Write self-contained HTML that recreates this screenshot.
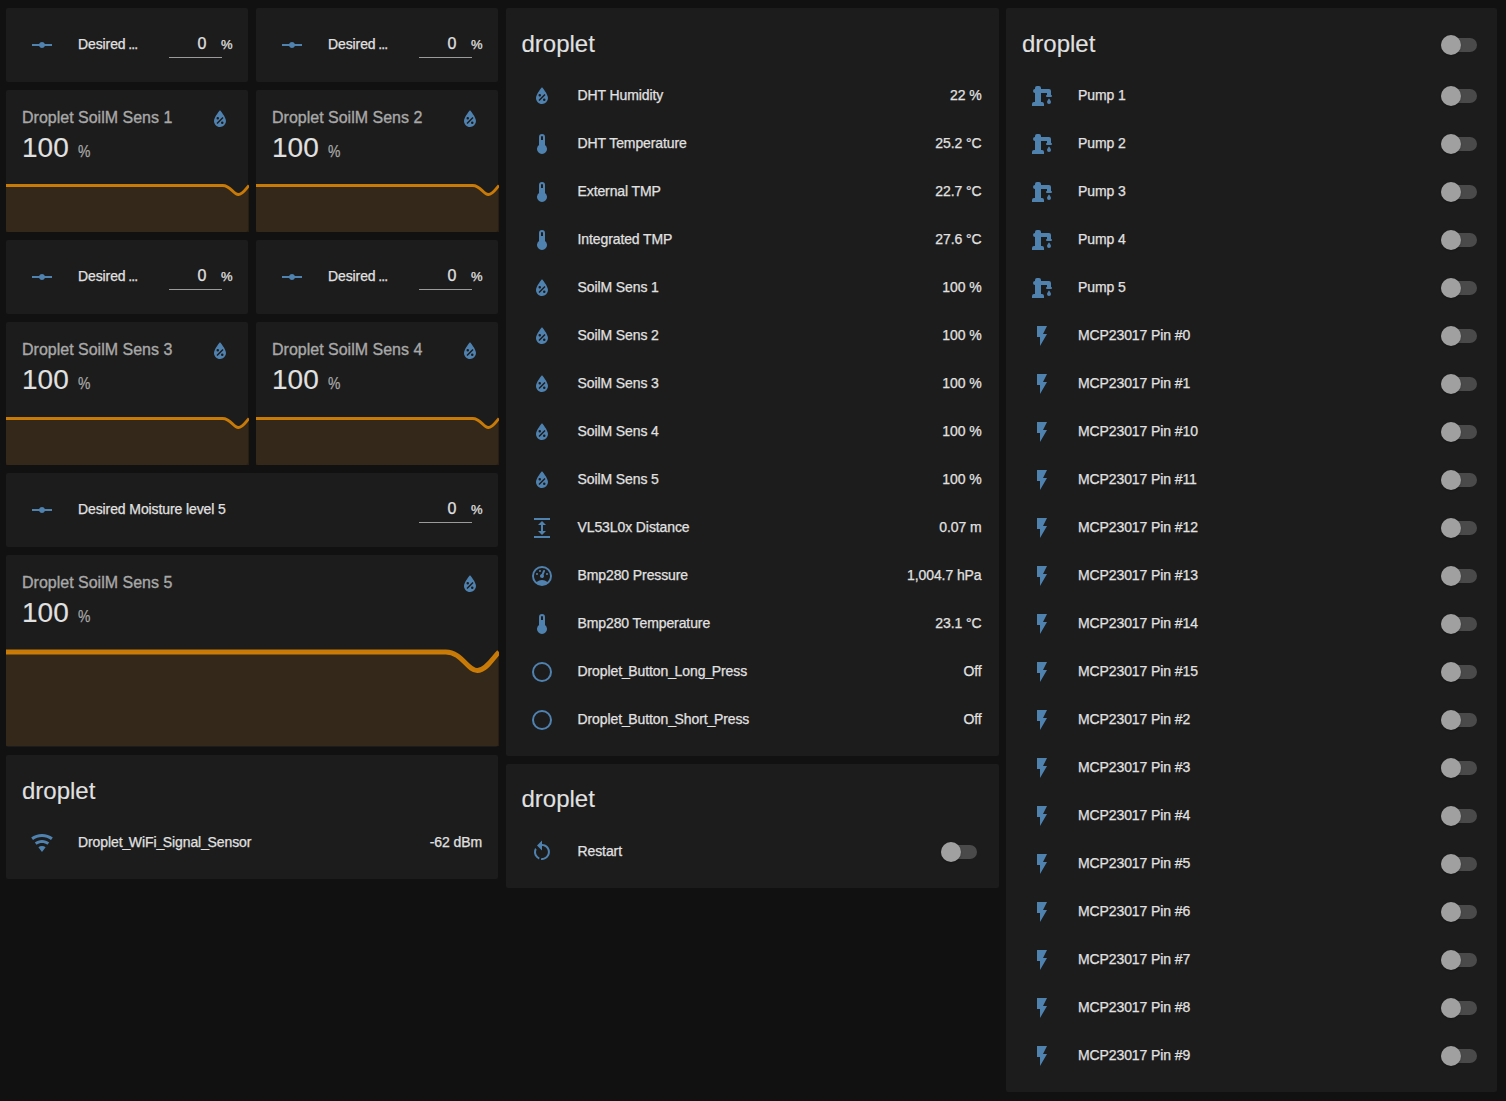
<!DOCTYPE html>
<html><head><meta charset="utf-8"><title>droplet</title>
<style>
html,body{margin:0;padding:0;}
body{width:1506px;height:1101px;background:#111111;position:relative;overflow:hidden;font-family:"Liberation Sans",sans-serif;color:#e1e1e1;}
.card{position:absolute;background:#1c1c1c;border-radius:2px;}
.t{position:absolute;white-space:nowrap;-webkit-text-stroke:0.25px currentColor;}
.ic{position:absolute;display:block;}
.gr{position:absolute;display:block;}
.u{letter-spacing:-1.4px;}
.big{-webkit-text-stroke:0.12px currentColor;}
.unit{transform:scaleX(.82);transform-origin:0 0;}
.ttl{-webkit-text-stroke:0.35px currentColor;}
.ul{position:absolute;height:1px;background:#9b9b9b;}
.trk{position:absolute;width:36px;height:14px;border-radius:7px;background:#4a4a4a;}
.thb{position:absolute;width:20px;height:20px;border-radius:50%;background:#a0a0a0;box-shadow:0 1px 2px rgba(0,0,0,.25);}
</style></head><body>
<div class="card" style="left:6px;top:8px;width:242px;height:74px;"></div>
<svg class="ic" style="left:30.00px;top:32.80px;width:24px;height:24px" viewBox="0 0 24 24"><path fill="#5082b0" d="M2 11H9.17C9.58 9.83 10.69 9 12 9S14.42 9.83 14.83 11H22V13H14.83C14.42 14.17 13.31 15 12 15S9.58 14.17 9.17 13H2V11Z"/></svg>
<div class="t " style="top:36.95px;font-size:14px;line-height:14px;letter-spacing:-0.1px;left:78px;">Desired <span style="letter-spacing:-0.9px;margin-left:-1.2px">...</span></div>
<div class="t " style="top:36.36px;font-size:16px;line-height:16px;right:1299.50px;">0</div>
<div class="t " style="top:38.00px;font-size:13px;line-height:13px;right:1273.50px;">%</div>
<div class="ul" style="left:168.80px;top:57.00px;width:53.3px"></div>
<div class="card" style="left:256px;top:8px;width:242px;height:74px;"></div>
<svg class="ic" style="left:280.00px;top:32.80px;width:24px;height:24px" viewBox="0 0 24 24"><path fill="#5082b0" d="M2 11H9.17C9.58 9.83 10.69 9 12 9S14.42 9.83 14.83 11H22V13H14.83C14.42 14.17 13.31 15 12 15S9.58 14.17 9.17 13H2V11Z"/></svg>
<div class="t " style="top:36.95px;font-size:14px;line-height:14px;letter-spacing:-0.1px;left:328px;">Desired <span style="letter-spacing:-0.9px;margin-left:-1.2px">...</span></div>
<div class="t " style="top:36.36px;font-size:16px;line-height:16px;right:1049.50px;">0</div>
<div class="t " style="top:38.00px;font-size:13px;line-height:13px;right:1023.50px;">%</div>
<div class="ul" style="left:418.80px;top:57.00px;width:53.3px"></div>
<div class="card" style="left:6px;top:90px;width:242px;height:142px;overflow:hidden;"></div>
<div class="t ttl" style="top:109.86px;font-size:16px;line-height:16px;color:#a8a8a8;left:22px;">Droplet SoilM Sens 1</div>
<svg class="ic" style="left:208.00px;top:106.50px;width:24px;height:24px" viewBox="0 0 24 24"><path fill="#5082b0" d="M12,3.25C12,3.25 6,10 6,14C6,17.32 8.69,20 12,20A6,6 0 0,0 18,14C18,10 12,3.25 12,3.25M14.47,9.97L15.53,11.03L9.53,17.03L8.47,15.97M9.75,10A1.25,1.25 0 0,1 11,11.25A1.25,1.25 0 0,1 9.75,12.5A1.25,1.25 0 0,1 8.5,11.25A1.25,1.25 0 0,1 9.75,10M14.25,14.5A1.25,1.25 0 0,1 15.5,15.75A1.25,1.25 0 0,1 14.25,17A1.25,1.25 0 0,1 13,15.75A1.25,1.25 0 0,1 14.25,14.5Z"/></svg>
<div class="t big" style="top:134.10px;font-size:28px;line-height:28px;left:22px;">100</div>
<div class="t unit" style="top:143.41px;font-size:17px;line-height:17px;color:#a8a8a8;left:78px;">%</div>
<svg class="gr" style="left:5.50px;top:184.00px;width:243.00px;height:48.00px" viewBox="0 0 500 100" preserveAspectRatio="none"><path d="M0,3 L446,3 C462,3 468,22 478,22 C487,22 494,9 500,3 L500,100 L0,100 Z" fill="#ff9800" fill-opacity="0.1"/><path d="M0,3 L446,3 C462,3 468,22 478,22 C487,22 494,9 500,3" fill="none" stroke="#ff9800" stroke-width="6" stroke-opacity="0.75"/></svg>
<div class="card" style="left:256px;top:90px;width:242px;height:142px;overflow:hidden;"></div>
<div class="t ttl" style="top:109.86px;font-size:16px;line-height:16px;color:#a8a8a8;left:272px;">Droplet SoilM Sens 2</div>
<svg class="ic" style="left:458.00px;top:106.50px;width:24px;height:24px" viewBox="0 0 24 24"><path fill="#5082b0" d="M12,3.25C12,3.25 6,10 6,14C6,17.32 8.69,20 12,20A6,6 0 0,0 18,14C18,10 12,3.25 12,3.25M14.47,9.97L15.53,11.03L9.53,17.03L8.47,15.97M9.75,10A1.25,1.25 0 0,1 11,11.25A1.25,1.25 0 0,1 9.75,12.5A1.25,1.25 0 0,1 8.5,11.25A1.25,1.25 0 0,1 9.75,10M14.25,14.5A1.25,1.25 0 0,1 15.5,15.75A1.25,1.25 0 0,1 14.25,17A1.25,1.25 0 0,1 13,15.75A1.25,1.25 0 0,1 14.25,14.5Z"/></svg>
<div class="t big" style="top:134.10px;font-size:28px;line-height:28px;left:272px;">100</div>
<div class="t unit" style="top:143.41px;font-size:17px;line-height:17px;color:#a8a8a8;left:328px;">%</div>
<svg class="gr" style="left:255.50px;top:184.00px;width:243.00px;height:48.00px" viewBox="0 0 500 100" preserveAspectRatio="none"><path d="M0,3 L446,3 C462,3 468,22 478,22 C487,22 494,9 500,3 L500,100 L0,100 Z" fill="#ff9800" fill-opacity="0.1"/><path d="M0,3 L446,3 C462,3 468,22 478,22 C487,22 494,9 500,3" fill="none" stroke="#ff9800" stroke-width="6" stroke-opacity="0.75"/></svg>
<div class="card" style="left:6px;top:240px;width:242px;height:74px;"></div>
<svg class="ic" style="left:30.00px;top:264.80px;width:24px;height:24px" viewBox="0 0 24 24"><path fill="#5082b0" d="M2 11H9.17C9.58 9.83 10.69 9 12 9S14.42 9.83 14.83 11H22V13H14.83C14.42 14.17 13.31 15 12 15S9.58 14.17 9.17 13H2V11Z"/></svg>
<div class="t " style="top:268.95px;font-size:14px;line-height:14px;letter-spacing:-0.1px;left:78px;">Desired <span style="letter-spacing:-0.9px;margin-left:-1.2px">...</span></div>
<div class="t " style="top:268.36px;font-size:16px;line-height:16px;right:1299.50px;">0</div>
<div class="t " style="top:270.00px;font-size:13px;line-height:13px;right:1273.50px;">%</div>
<div class="ul" style="left:168.80px;top:289.00px;width:53.3px"></div>
<div class="card" style="left:256px;top:240px;width:242px;height:74px;"></div>
<svg class="ic" style="left:280.00px;top:264.80px;width:24px;height:24px" viewBox="0 0 24 24"><path fill="#5082b0" d="M2 11H9.17C9.58 9.83 10.69 9 12 9S14.42 9.83 14.83 11H22V13H14.83C14.42 14.17 13.31 15 12 15S9.58 14.17 9.17 13H2V11Z"/></svg>
<div class="t " style="top:268.95px;font-size:14px;line-height:14px;letter-spacing:-0.1px;left:328px;">Desired <span style="letter-spacing:-0.9px;margin-left:-1.2px">...</span></div>
<div class="t " style="top:268.36px;font-size:16px;line-height:16px;right:1049.50px;">0</div>
<div class="t " style="top:270.00px;font-size:13px;line-height:13px;right:1023.50px;">%</div>
<div class="ul" style="left:418.80px;top:289.00px;width:53.3px"></div>
<div class="card" style="left:6px;top:322px;width:242px;height:142.5px;overflow:hidden;"></div>
<div class="t ttl" style="top:341.86px;font-size:16px;line-height:16px;color:#a8a8a8;left:22px;">Droplet SoilM Sens 3</div>
<svg class="ic" style="left:208.00px;top:338.50px;width:24px;height:24px" viewBox="0 0 24 24"><path fill="#5082b0" d="M12,3.25C12,3.25 6,10 6,14C6,17.32 8.69,20 12,20A6,6 0 0,0 18,14C18,10 12,3.25 12,3.25M14.47,9.97L15.53,11.03L9.53,17.03L8.47,15.97M9.75,10A1.25,1.25 0 0,1 11,11.25A1.25,1.25 0 0,1 9.75,12.5A1.25,1.25 0 0,1 8.5,11.25A1.25,1.25 0 0,1 9.75,10M14.25,14.5A1.25,1.25 0 0,1 15.5,15.75A1.25,1.25 0 0,1 14.25,17A1.25,1.25 0 0,1 13,15.75A1.25,1.25 0 0,1 14.25,14.5Z"/></svg>
<div class="t big" style="top:366.10px;font-size:28px;line-height:28px;left:22px;">100</div>
<div class="t unit" style="top:375.41px;font-size:17px;line-height:17px;color:#a8a8a8;left:78px;">%</div>
<svg class="gr" style="left:5.50px;top:416.50px;width:243.00px;height:48.00px" viewBox="0 0 500 100" preserveAspectRatio="none"><path d="M0,3 L446,3 C462,3 468,22 478,22 C487,22 494,9 500,3 L500,100 L0,100 Z" fill="#ff9800" fill-opacity="0.1"/><path d="M0,3 L446,3 C462,3 468,22 478,22 C487,22 494,9 500,3" fill="none" stroke="#ff9800" stroke-width="6" stroke-opacity="0.75"/></svg>
<div class="card" style="left:256px;top:322px;width:242px;height:142.5px;overflow:hidden;"></div>
<div class="t ttl" style="top:341.86px;font-size:16px;line-height:16px;color:#a8a8a8;left:272px;">Droplet SoilM Sens 4</div>
<svg class="ic" style="left:458.00px;top:338.50px;width:24px;height:24px" viewBox="0 0 24 24"><path fill="#5082b0" d="M12,3.25C12,3.25 6,10 6,14C6,17.32 8.69,20 12,20A6,6 0 0,0 18,14C18,10 12,3.25 12,3.25M14.47,9.97L15.53,11.03L9.53,17.03L8.47,15.97M9.75,10A1.25,1.25 0 0,1 11,11.25A1.25,1.25 0 0,1 9.75,12.5A1.25,1.25 0 0,1 8.5,11.25A1.25,1.25 0 0,1 9.75,10M14.25,14.5A1.25,1.25 0 0,1 15.5,15.75A1.25,1.25 0 0,1 14.25,17A1.25,1.25 0 0,1 13,15.75A1.25,1.25 0 0,1 14.25,14.5Z"/></svg>
<div class="t big" style="top:366.10px;font-size:28px;line-height:28px;left:272px;">100</div>
<div class="t unit" style="top:375.41px;font-size:17px;line-height:17px;color:#a8a8a8;left:328px;">%</div>
<svg class="gr" style="left:255.50px;top:416.50px;width:243.00px;height:48.00px" viewBox="0 0 500 100" preserveAspectRatio="none"><path d="M0,3 L446,3 C462,3 468,22 478,22 C487,22 494,9 500,3 L500,100 L0,100 Z" fill="#ff9800" fill-opacity="0.1"/><path d="M0,3 L446,3 C462,3 468,22 478,22 C487,22 494,9 500,3" fill="none" stroke="#ff9800" stroke-width="6" stroke-opacity="0.75"/></svg>
<div class="card" style="left:6px;top:473px;width:492px;height:74px;"></div>
<svg class="ic" style="left:30.00px;top:497.80px;width:24px;height:24px" viewBox="0 0 24 24"><path fill="#5082b0" d="M2 11H9.17C9.58 9.83 10.69 9 12 9S14.42 9.83 14.83 11H22V13H14.83C14.42 14.17 13.31 15 12 15S9.58 14.17 9.17 13H2V11Z"/></svg>
<div class="t " style="top:501.95px;font-size:14px;line-height:14px;letter-spacing:-0.1px;left:78px;">Desired Moisture level 5</div>
<div class="t " style="top:501.36px;font-size:16px;line-height:16px;right:1049.50px;">0</div>
<div class="t " style="top:503.00px;font-size:13px;line-height:13px;right:1023.50px;">%</div>
<div class="ul" style="left:418.80px;top:522.00px;width:53.3px"></div>
<div class="card" style="left:6px;top:555px;width:492px;height:191.5px;overflow:hidden;"></div>
<div class="t ttl" style="top:574.86px;font-size:16px;line-height:16px;color:#a8a8a8;left:22px;">Droplet SoilM Sens 5</div>
<svg class="ic" style="left:458.00px;top:571.50px;width:24px;height:24px" viewBox="0 0 24 24"><path fill="#5082b0" d="M12,3.25C12,3.25 6,10 6,14C6,17.32 8.69,20 12,20A6,6 0 0,0 18,14C18,10 12,3.25 12,3.25M14.47,9.97L15.53,11.03L9.53,17.03L8.47,15.97M9.75,10A1.25,1.25 0 0,1 11,11.25A1.25,1.25 0 0,1 9.75,12.5A1.25,1.25 0 0,1 8.5,11.25A1.25,1.25 0 0,1 9.75,10M14.25,14.5A1.25,1.25 0 0,1 15.5,15.75A1.25,1.25 0 0,1 14.25,17A1.25,1.25 0 0,1 13,15.75A1.25,1.25 0 0,1 14.25,14.5Z"/></svg>
<div class="t big" style="top:599.10px;font-size:28px;line-height:28px;left:22px;">100</div>
<div class="t unit" style="top:608.41px;font-size:17px;line-height:17px;color:#a8a8a8;left:78px;">%</div>
<svg class="gr" style="left:5.50px;top:648.60px;width:493.00px;height:97.90px" viewBox="0 0 500 100" preserveAspectRatio="none"><path d="M0,3 L446,3 C462,3 468,22 478,22 C487,22 494,9 500,3 L500,100 L0,100 Z" fill="#ff9800" fill-opacity="0.1"/><path d="M0,3 L446,3 C462,3 468,22 478,22 C487,22 494,9 500,3" fill="none" stroke="#ff9800" stroke-width="5" stroke-opacity="0.75"/></svg>
<div class="card" style="left:6px;top:755px;width:492px;height:124px;"></div>
<div class="t big" style="top:778.98px;font-size:24px;line-height:24px;left:22px;">droplet</div>
<svg class="ic" style="left:30.00px;top:830.50px;width:24px;height:24px" viewBox="0 0 24 24"><path fill="#5082b0" d="M12,21L15.6,16.2C14.6,15.45 13.35,15 12,15C10.65,15 9.4,15.45 8.4,16.2L12,21M12,3C7.95,3 4.21,4.34 1.2,6.6L3,9C5.5,7.12 8.62,6 12,6C15.38,6 18.5,7.12 21,9L22.8,6.6C19.79,4.34 16.05,3 12,3M12,9C9.3,9 6.81,9.89 4.8,11.4L6.6,13.8C8.1,12.67 9.97,12 12,12C14.03,12 15.9,12.67 17.4,13.8L19.2,11.4C17.19,9.89 14.7,9 12,9Z"/></svg>
<div class="t " style="top:834.65px;font-size:14px;line-height:14px;letter-spacing:-0.1px;left:78px;">Droplet<span class="u">_</span>WiFi<span class="u">_</span>Signal<span class="u">_</span>Sensor</div>
<div class="t " style="top:834.65px;font-size:14px;line-height:14px;letter-spacing:-0.1px;right:1024.00px;">-62 dBm</div>
<div class="card" style="left:505.5px;top:8px;width:493.0px;height:748px;"></div>
<div class="t big" style="top:31.98px;font-size:24px;line-height:24px;left:521.5px;">droplet</div>
<svg class="ic" style="left:529.50px;top:84.20px;width:24px;height:24px" viewBox="0 0 24 24"><path fill="#5082b0" d="M12,3.25C12,3.25 6,10 6,14C6,17.32 8.69,20 12,20A6,6 0 0,0 18,14C18,10 12,3.25 12,3.25M14.47,9.97L15.53,11.03L9.53,17.03L8.47,15.97M9.75,10A1.25,1.25 0 0,1 11,11.25A1.25,1.25 0 0,1 9.75,12.5A1.25,1.25 0 0,1 8.5,11.25A1.25,1.25 0 0,1 9.75,10M14.25,14.5A1.25,1.25 0 0,1 15.5,15.75A1.25,1.25 0 0,1 14.25,17A1.25,1.25 0 0,1 13,15.75A1.25,1.25 0 0,1 14.25,14.5Z"/></svg>
<div class="t " style="top:88.25px;font-size:14px;line-height:14px;letter-spacing:-0.1px;left:577.5px;">DHT Humidity</div>
<div class="t " style="top:88.25px;font-size:14px;line-height:14px;letter-spacing:-0.1px;right:524.50px;">22 %</div>
<svg class="ic" style="left:529.50px;top:132.20px;width:24px;height:24px" viewBox="0 0 24 24"><path fill="#5082b0" d="M15 13V5A3 3 0 0 0 9 5V13A5 5 0 1 0 15 13M12 4A1 1 0 0 1 13 5V8H11V5A1 1 0 0 1 12 4Z"/></svg>
<div class="t " style="top:136.25px;font-size:14px;line-height:14px;letter-spacing:-0.1px;left:577.5px;">DHT Temperature</div>
<div class="t " style="top:136.25px;font-size:14px;line-height:14px;letter-spacing:-0.1px;right:524.50px;">25.2 °C</div>
<svg class="ic" style="left:529.50px;top:180.20px;width:24px;height:24px" viewBox="0 0 24 24"><path fill="#5082b0" d="M15 13V5A3 3 0 0 0 9 5V13A5 5 0 1 0 15 13M12 4A1 1 0 0 1 13 5V8H11V5A1 1 0 0 1 12 4Z"/></svg>
<div class="t " style="top:184.25px;font-size:14px;line-height:14px;letter-spacing:-0.1px;left:577.5px;">External TMP</div>
<div class="t " style="top:184.25px;font-size:14px;line-height:14px;letter-spacing:-0.1px;right:524.50px;">22.7 °C</div>
<svg class="ic" style="left:529.50px;top:228.20px;width:24px;height:24px" viewBox="0 0 24 24"><path fill="#5082b0" d="M15 13V5A3 3 0 0 0 9 5V13A5 5 0 1 0 15 13M12 4A1 1 0 0 1 13 5V8H11V5A1 1 0 0 1 12 4Z"/></svg>
<div class="t " style="top:232.25px;font-size:14px;line-height:14px;letter-spacing:-0.1px;left:577.5px;">Integrated TMP</div>
<div class="t " style="top:232.25px;font-size:14px;line-height:14px;letter-spacing:-0.1px;right:524.50px;">27.6 °C</div>
<svg class="ic" style="left:529.50px;top:276.20px;width:24px;height:24px" viewBox="0 0 24 24"><path fill="#5082b0" d="M12,3.25C12,3.25 6,10 6,14C6,17.32 8.69,20 12,20A6,6 0 0,0 18,14C18,10 12,3.25 12,3.25M14.47,9.97L15.53,11.03L9.53,17.03L8.47,15.97M9.75,10A1.25,1.25 0 0,1 11,11.25A1.25,1.25 0 0,1 9.75,12.5A1.25,1.25 0 0,1 8.5,11.25A1.25,1.25 0 0,1 9.75,10M14.25,14.5A1.25,1.25 0 0,1 15.5,15.75A1.25,1.25 0 0,1 14.25,17A1.25,1.25 0 0,1 13,15.75A1.25,1.25 0 0,1 14.25,14.5Z"/></svg>
<div class="t " style="top:280.25px;font-size:14px;line-height:14px;letter-spacing:-0.1px;left:577.5px;">SoilM Sens 1</div>
<div class="t " style="top:280.25px;font-size:14px;line-height:14px;letter-spacing:-0.1px;right:524.50px;">100 %</div>
<svg class="ic" style="left:529.50px;top:324.20px;width:24px;height:24px" viewBox="0 0 24 24"><path fill="#5082b0" d="M12,3.25C12,3.25 6,10 6,14C6,17.32 8.69,20 12,20A6,6 0 0,0 18,14C18,10 12,3.25 12,3.25M14.47,9.97L15.53,11.03L9.53,17.03L8.47,15.97M9.75,10A1.25,1.25 0 0,1 11,11.25A1.25,1.25 0 0,1 9.75,12.5A1.25,1.25 0 0,1 8.5,11.25A1.25,1.25 0 0,1 9.75,10M14.25,14.5A1.25,1.25 0 0,1 15.5,15.75A1.25,1.25 0 0,1 14.25,17A1.25,1.25 0 0,1 13,15.75A1.25,1.25 0 0,1 14.25,14.5Z"/></svg>
<div class="t " style="top:328.25px;font-size:14px;line-height:14px;letter-spacing:-0.1px;left:577.5px;">SoilM Sens 2</div>
<div class="t " style="top:328.25px;font-size:14px;line-height:14px;letter-spacing:-0.1px;right:524.50px;">100 %</div>
<svg class="ic" style="left:529.50px;top:372.20px;width:24px;height:24px" viewBox="0 0 24 24"><path fill="#5082b0" d="M12,3.25C12,3.25 6,10 6,14C6,17.32 8.69,20 12,20A6,6 0 0,0 18,14C18,10 12,3.25 12,3.25M14.47,9.97L15.53,11.03L9.53,17.03L8.47,15.97M9.75,10A1.25,1.25 0 0,1 11,11.25A1.25,1.25 0 0,1 9.75,12.5A1.25,1.25 0 0,1 8.5,11.25A1.25,1.25 0 0,1 9.75,10M14.25,14.5A1.25,1.25 0 0,1 15.5,15.75A1.25,1.25 0 0,1 14.25,17A1.25,1.25 0 0,1 13,15.75A1.25,1.25 0 0,1 14.25,14.5Z"/></svg>
<div class="t " style="top:376.25px;font-size:14px;line-height:14px;letter-spacing:-0.1px;left:577.5px;">SoilM Sens 3</div>
<div class="t " style="top:376.25px;font-size:14px;line-height:14px;letter-spacing:-0.1px;right:524.50px;">100 %</div>
<svg class="ic" style="left:529.50px;top:420.20px;width:24px;height:24px" viewBox="0 0 24 24"><path fill="#5082b0" d="M12,3.25C12,3.25 6,10 6,14C6,17.32 8.69,20 12,20A6,6 0 0,0 18,14C18,10 12,3.25 12,3.25M14.47,9.97L15.53,11.03L9.53,17.03L8.47,15.97M9.75,10A1.25,1.25 0 0,1 11,11.25A1.25,1.25 0 0,1 9.75,12.5A1.25,1.25 0 0,1 8.5,11.25A1.25,1.25 0 0,1 9.75,10M14.25,14.5A1.25,1.25 0 0,1 15.5,15.75A1.25,1.25 0 0,1 14.25,17A1.25,1.25 0 0,1 13,15.75A1.25,1.25 0 0,1 14.25,14.5Z"/></svg>
<div class="t " style="top:424.25px;font-size:14px;line-height:14px;letter-spacing:-0.1px;left:577.5px;">SoilM Sens 4</div>
<div class="t " style="top:424.25px;font-size:14px;line-height:14px;letter-spacing:-0.1px;right:524.50px;">100 %</div>
<svg class="ic" style="left:529.50px;top:468.20px;width:24px;height:24px" viewBox="0 0 24 24"><path fill="#5082b0" d="M12,3.25C12,3.25 6,10 6,14C6,17.32 8.69,20 12,20A6,6 0 0,0 18,14C18,10 12,3.25 12,3.25M14.47,9.97L15.53,11.03L9.53,17.03L8.47,15.97M9.75,10A1.25,1.25 0 0,1 11,11.25A1.25,1.25 0 0,1 9.75,12.5A1.25,1.25 0 0,1 8.5,11.25A1.25,1.25 0 0,1 9.75,10M14.25,14.5A1.25,1.25 0 0,1 15.5,15.75A1.25,1.25 0 0,1 14.25,17A1.25,1.25 0 0,1 13,15.75A1.25,1.25 0 0,1 14.25,14.5Z"/></svg>
<div class="t " style="top:472.25px;font-size:14px;line-height:14px;letter-spacing:-0.1px;left:577.5px;">SoilM Sens 5</div>
<div class="t " style="top:472.25px;font-size:14px;line-height:14px;letter-spacing:-0.1px;right:524.50px;">100 %</div>
<svg class="ic" style="left:529.50px;top:516.20px;width:24px;height:24px" viewBox="0 0 24 24"><path fill="#5082b0" d="M13,9V15H16L12,19L8,15H11V9H8L12,5L16,9H13M4,2H20V4H4V2M4,20H20V22H4V20Z"/></svg>
<div class="t " style="top:520.25px;font-size:14px;line-height:14px;letter-spacing:-0.1px;left:577.5px;">VL53L0x Distance</div>
<div class="t " style="top:520.25px;font-size:14px;line-height:14px;letter-spacing:-0.1px;right:524.50px;">0.07 m</div>
<svg class="ic" style="left:529.50px;top:564.20px;width:24px;height:24px" viewBox="0 0 24 24"><path fill="#5082b0" d="M12,2A10,10 0 0,0 2,12A10,10 0 0,0 12,22A10,10 0 0,0 22,12A10,10 0 0,0 12,2M12,4A8,8 0 0,1 20,12C20,14.4 19,16.5 17.3,18C15.9,16.7 14,16 12,16C10,16 8.2,16.7 6.7,18C5,16.5 4,14.4 4,12A8,8 0 0,1 12,4M14,5.89C13.62,5.9 13.26,6.15 13.1,6.54L11.81,9.77L11.71,10C11,10.13 10.41,10.6 10.14,11.26C9.73,12.29 10.23,13.45 11.26,13.86C12.29,14.27 13.45,13.77 13.86,12.74C14.12,12.08 14,11.32 13.57,10.76L13.67,10.5L14.96,7.29L14.97,7.26C15.17,6.75 14.92,6.17 14.41,5.96C14.28,5.91 14.15,5.89 14,5.89M10,6A1,1 0 0,0 9,7A1,1 0 0,0 10,8A1,1 0 0,0 11,7A1,1 0 0,0 10,6M7,9A1,1 0 0,0 6,10A1,1 0 0,0 7,11A1,1 0 0,0 8,10A1,1 0 0,0 7,9M17,9A1,1 0 0,0 16,10A1,1 0 0,0 17,11A1,1 0 0,0 18,10A1,1 0 0,0 17,9Z"/></svg>
<div class="t " style="top:568.25px;font-size:14px;line-height:14px;letter-spacing:-0.1px;left:577.5px;">Bmp280 Pressure</div>
<div class="t " style="top:568.25px;font-size:14px;line-height:14px;letter-spacing:-0.1px;right:524.50px;">1,004.7 hPa</div>
<svg class="ic" style="left:529.50px;top:612.20px;width:24px;height:24px" viewBox="0 0 24 24"><path fill="#5082b0" d="M15 13V5A3 3 0 0 0 9 5V13A5 5 0 1 0 15 13M12 4A1 1 0 0 1 13 5V8H11V5A1 1 0 0 1 12 4Z"/></svg>
<div class="t " style="top:616.25px;font-size:14px;line-height:14px;letter-spacing:-0.1px;left:577.5px;">Bmp280 Temperature</div>
<div class="t " style="top:616.25px;font-size:14px;line-height:14px;letter-spacing:-0.1px;right:524.50px;">23.1 °C</div>
<svg class="ic" style="left:529.50px;top:660.20px;width:24px;height:24px" viewBox="0 0 24 24"><path fill="#5082b0" d="M12,20A8,8 0 0,1 4,12A8,8 0 0,1 12,4A8,8 0 0,1 20,12A8,8 0 0,1 12,20M12,2A10,10 0 0,0 2,12A10,10 0 0,0 12,22A10,10 0 0,0 22,12A10,10 0 0,0 12,2Z"/></svg>
<div class="t " style="top:664.25px;font-size:14px;line-height:14px;letter-spacing:-0.1px;left:577.5px;">Droplet<span class="u">_</span>Button<span class="u">_</span>Long<span class="u">_</span>Press</div>
<div class="t " style="top:664.25px;font-size:14px;line-height:14px;letter-spacing:-0.1px;right:524.50px;">Off</div>
<svg class="ic" style="left:529.50px;top:708.20px;width:24px;height:24px" viewBox="0 0 24 24"><path fill="#5082b0" d="M12,20A8,8 0 0,1 4,12A8,8 0 0,1 12,4A8,8 0 0,1 20,12A8,8 0 0,1 12,20M12,2A10,10 0 0,0 2,12A10,10 0 0,0 12,22A10,10 0 0,0 22,12A10,10 0 0,0 12,2Z"/></svg>
<div class="t " style="top:712.25px;font-size:14px;line-height:14px;letter-spacing:-0.1px;left:577.5px;">Droplet<span class="u">_</span>Button<span class="u">_</span>Short<span class="u">_</span>Press</div>
<div class="t " style="top:712.25px;font-size:14px;line-height:14px;letter-spacing:-0.1px;right:524.50px;">Off</div>
<div class="card" style="left:505.5px;top:764px;width:493.0px;height:124px;"></div>
<div class="t big" style="top:787.48px;font-size:24px;line-height:24px;left:521.5px;">droplet</div>
<svg class="ic" style="left:529.50px;top:840.00px;width:24px;height:24px" viewBox="0 0 24 24"><path fill="#5082b0" d="M12,4C14.1,4 16.1,4.8 17.6,6.3C20.7,9.4 20.7,14.5 17.6,17.6C15.8,19.5 13.3,20.2 10.9,19.9L11.4,17.9C13.1,18.1 14.9,17.5 16.2,16.2C18.5,13.9 18.5,10.1 16.2,7.7C15.1,6.6 13.5,6 12,6V10.6L7,5.6L12,0.6V4M6.3,17.6C3.7,15 3.3,11 5.1,7.9L6.6,9.4C5.5,11.6 5.9,14.4 7.8,16.2C8.3,16.7 8.9,17.1 9.6,17.4L9,19.4C8,19 7.1,18.4 6.3,17.6Z"/></svg>
<div class="t " style="top:844.05px;font-size:14px;line-height:14px;letter-spacing:-0.1px;left:577.5px;">Restart</div>
<div class="trk" style="left:941.00px;top:845.00px"></div>
<div class="thb" style="left:941.00px;top:842.00px"></div>
<div class="card" style="left:1006px;top:8px;width:491px;height:1084px;"></div>
<div class="t big" style="top:31.78px;font-size:24px;line-height:24px;left:1022px;">droplet</div>
<div class="trk" style="left:1440.50px;top:38.00px"></div>
<div class="thb" style="left:1440.50px;top:35.00px"></div>
<svg class="ic" style="left:1030.00px;top:84.20px;width:24px;height:24px" viewBox="0 0 24 24"><path fill="#5082b0" d="M19,14.5C19,14.5 21,16.67 21,18A2,2 0 0,1 19,20A2,2 0 0,1 17,18C17,16.67 19,14.5 19,14.5M5,18V9A2,2 0 0,1 3,7A2,2 0 0,1 5,5V4A2,2 0 0,1 7,2H9A2,2 0 0,1 11,4V5H19A2,2 0 0,1 21,7V9L21,11A1,1 0 0,1 22,12A1,1 0 0,1 21,13H17A1,1 0 0,1 16,12A1,1 0 0,1 17,11V9H11V18H12A2,2 0 0,1 14,20V22H2V20A2,2 0 0,1 4,18H5Z"/></svg>
<div class="t " style="top:88.25px;font-size:14px;line-height:14px;letter-spacing:-0.1px;left:1078px;">Pump 1</div>
<div class="trk" style="left:1440.50px;top:89.20px"></div>
<div class="thb" style="left:1440.50px;top:86.20px"></div>
<svg class="ic" style="left:1030.00px;top:132.20px;width:24px;height:24px" viewBox="0 0 24 24"><path fill="#5082b0" d="M19,14.5C19,14.5 21,16.67 21,18A2,2 0 0,1 19,20A2,2 0 0,1 17,18C17,16.67 19,14.5 19,14.5M5,18V9A2,2 0 0,1 3,7A2,2 0 0,1 5,5V4A2,2 0 0,1 7,2H9A2,2 0 0,1 11,4V5H19A2,2 0 0,1 21,7V9L21,11A1,1 0 0,1 22,12A1,1 0 0,1 21,13H17A1,1 0 0,1 16,12A1,1 0 0,1 17,11V9H11V18H12A2,2 0 0,1 14,20V22H2V20A2,2 0 0,1 4,18H5Z"/></svg>
<div class="t " style="top:136.25px;font-size:14px;line-height:14px;letter-spacing:-0.1px;left:1078px;">Pump 2</div>
<div class="trk" style="left:1440.50px;top:137.20px"></div>
<div class="thb" style="left:1440.50px;top:134.20px"></div>
<svg class="ic" style="left:1030.00px;top:180.20px;width:24px;height:24px" viewBox="0 0 24 24"><path fill="#5082b0" d="M19,14.5C19,14.5 21,16.67 21,18A2,2 0 0,1 19,20A2,2 0 0,1 17,18C17,16.67 19,14.5 19,14.5M5,18V9A2,2 0 0,1 3,7A2,2 0 0,1 5,5V4A2,2 0 0,1 7,2H9A2,2 0 0,1 11,4V5H19A2,2 0 0,1 21,7V9L21,11A1,1 0 0,1 22,12A1,1 0 0,1 21,13H17A1,1 0 0,1 16,12A1,1 0 0,1 17,11V9H11V18H12A2,2 0 0,1 14,20V22H2V20A2,2 0 0,1 4,18H5Z"/></svg>
<div class="t " style="top:184.25px;font-size:14px;line-height:14px;letter-spacing:-0.1px;left:1078px;">Pump 3</div>
<div class="trk" style="left:1440.50px;top:185.20px"></div>
<div class="thb" style="left:1440.50px;top:182.20px"></div>
<svg class="ic" style="left:1030.00px;top:228.20px;width:24px;height:24px" viewBox="0 0 24 24"><path fill="#5082b0" d="M19,14.5C19,14.5 21,16.67 21,18A2,2 0 0,1 19,20A2,2 0 0,1 17,18C17,16.67 19,14.5 19,14.5M5,18V9A2,2 0 0,1 3,7A2,2 0 0,1 5,5V4A2,2 0 0,1 7,2H9A2,2 0 0,1 11,4V5H19A2,2 0 0,1 21,7V9L21,11A1,1 0 0,1 22,12A1,1 0 0,1 21,13H17A1,1 0 0,1 16,12A1,1 0 0,1 17,11V9H11V18H12A2,2 0 0,1 14,20V22H2V20A2,2 0 0,1 4,18H5Z"/></svg>
<div class="t " style="top:232.25px;font-size:14px;line-height:14px;letter-spacing:-0.1px;left:1078px;">Pump 4</div>
<div class="trk" style="left:1440.50px;top:233.20px"></div>
<div class="thb" style="left:1440.50px;top:230.20px"></div>
<svg class="ic" style="left:1030.00px;top:276.20px;width:24px;height:24px" viewBox="0 0 24 24"><path fill="#5082b0" d="M19,14.5C19,14.5 21,16.67 21,18A2,2 0 0,1 19,20A2,2 0 0,1 17,18C17,16.67 19,14.5 19,14.5M5,18V9A2,2 0 0,1 3,7A2,2 0 0,1 5,5V4A2,2 0 0,1 7,2H9A2,2 0 0,1 11,4V5H19A2,2 0 0,1 21,7V9L21,11A1,1 0 0,1 22,12A1,1 0 0,1 21,13H17A1,1 0 0,1 16,12A1,1 0 0,1 17,11V9H11V18H12A2,2 0 0,1 14,20V22H2V20A2,2 0 0,1 4,18H5Z"/></svg>
<div class="t " style="top:280.25px;font-size:14px;line-height:14px;letter-spacing:-0.1px;left:1078px;">Pump 5</div>
<div class="trk" style="left:1440.50px;top:281.20px"></div>
<div class="thb" style="left:1440.50px;top:278.20px"></div>
<svg class="ic" style="left:1030.00px;top:324.20px;width:24px;height:24px" viewBox="0 0 24 24"><path fill="#5082b0" d="M7,2V13H10V22L17,10H13L17,2H7Z"/></svg>
<div class="t " style="top:328.25px;font-size:14px;line-height:14px;letter-spacing:-0.1px;left:1078px;">MCP23017 Pin #0</div>
<div class="trk" style="left:1440.50px;top:329.20px"></div>
<div class="thb" style="left:1440.50px;top:326.20px"></div>
<svg class="ic" style="left:1030.00px;top:372.20px;width:24px;height:24px" viewBox="0 0 24 24"><path fill="#5082b0" d="M7,2V13H10V22L17,10H13L17,2H7Z"/></svg>
<div class="t " style="top:376.25px;font-size:14px;line-height:14px;letter-spacing:-0.1px;left:1078px;">MCP23017 Pin #1</div>
<div class="trk" style="left:1440.50px;top:377.20px"></div>
<div class="thb" style="left:1440.50px;top:374.20px"></div>
<svg class="ic" style="left:1030.00px;top:420.20px;width:24px;height:24px" viewBox="0 0 24 24"><path fill="#5082b0" d="M7,2V13H10V22L17,10H13L17,2H7Z"/></svg>
<div class="t " style="top:424.25px;font-size:14px;line-height:14px;letter-spacing:-0.1px;left:1078px;">MCP23017 Pin #10</div>
<div class="trk" style="left:1440.50px;top:425.20px"></div>
<div class="thb" style="left:1440.50px;top:422.20px"></div>
<svg class="ic" style="left:1030.00px;top:468.20px;width:24px;height:24px" viewBox="0 0 24 24"><path fill="#5082b0" d="M7,2V13H10V22L17,10H13L17,2H7Z"/></svg>
<div class="t " style="top:472.25px;font-size:14px;line-height:14px;letter-spacing:-0.1px;left:1078px;">MCP23017 Pin #11</div>
<div class="trk" style="left:1440.50px;top:473.20px"></div>
<div class="thb" style="left:1440.50px;top:470.20px"></div>
<svg class="ic" style="left:1030.00px;top:516.20px;width:24px;height:24px" viewBox="0 0 24 24"><path fill="#5082b0" d="M7,2V13H10V22L17,10H13L17,2H7Z"/></svg>
<div class="t " style="top:520.25px;font-size:14px;line-height:14px;letter-spacing:-0.1px;left:1078px;">MCP23017 Pin #12</div>
<div class="trk" style="left:1440.50px;top:521.20px"></div>
<div class="thb" style="left:1440.50px;top:518.20px"></div>
<svg class="ic" style="left:1030.00px;top:564.20px;width:24px;height:24px" viewBox="0 0 24 24"><path fill="#5082b0" d="M7,2V13H10V22L17,10H13L17,2H7Z"/></svg>
<div class="t " style="top:568.25px;font-size:14px;line-height:14px;letter-spacing:-0.1px;left:1078px;">MCP23017 Pin #13</div>
<div class="trk" style="left:1440.50px;top:569.20px"></div>
<div class="thb" style="left:1440.50px;top:566.20px"></div>
<svg class="ic" style="left:1030.00px;top:612.20px;width:24px;height:24px" viewBox="0 0 24 24"><path fill="#5082b0" d="M7,2V13H10V22L17,10H13L17,2H7Z"/></svg>
<div class="t " style="top:616.25px;font-size:14px;line-height:14px;letter-spacing:-0.1px;left:1078px;">MCP23017 Pin #14</div>
<div class="trk" style="left:1440.50px;top:617.20px"></div>
<div class="thb" style="left:1440.50px;top:614.20px"></div>
<svg class="ic" style="left:1030.00px;top:660.20px;width:24px;height:24px" viewBox="0 0 24 24"><path fill="#5082b0" d="M7,2V13H10V22L17,10H13L17,2H7Z"/></svg>
<div class="t " style="top:664.25px;font-size:14px;line-height:14px;letter-spacing:-0.1px;left:1078px;">MCP23017 Pin #15</div>
<div class="trk" style="left:1440.50px;top:665.20px"></div>
<div class="thb" style="left:1440.50px;top:662.20px"></div>
<svg class="ic" style="left:1030.00px;top:708.20px;width:24px;height:24px" viewBox="0 0 24 24"><path fill="#5082b0" d="M7,2V13H10V22L17,10H13L17,2H7Z"/></svg>
<div class="t " style="top:712.25px;font-size:14px;line-height:14px;letter-spacing:-0.1px;left:1078px;">MCP23017 Pin #2</div>
<div class="trk" style="left:1440.50px;top:713.20px"></div>
<div class="thb" style="left:1440.50px;top:710.20px"></div>
<svg class="ic" style="left:1030.00px;top:756.20px;width:24px;height:24px" viewBox="0 0 24 24"><path fill="#5082b0" d="M7,2V13H10V22L17,10H13L17,2H7Z"/></svg>
<div class="t " style="top:760.25px;font-size:14px;line-height:14px;letter-spacing:-0.1px;left:1078px;">MCP23017 Pin #3</div>
<div class="trk" style="left:1440.50px;top:761.20px"></div>
<div class="thb" style="left:1440.50px;top:758.20px"></div>
<svg class="ic" style="left:1030.00px;top:804.20px;width:24px;height:24px" viewBox="0 0 24 24"><path fill="#5082b0" d="M7,2V13H10V22L17,10H13L17,2H7Z"/></svg>
<div class="t " style="top:808.25px;font-size:14px;line-height:14px;letter-spacing:-0.1px;left:1078px;">MCP23017 Pin #4</div>
<div class="trk" style="left:1440.50px;top:809.20px"></div>
<div class="thb" style="left:1440.50px;top:806.20px"></div>
<svg class="ic" style="left:1030.00px;top:852.20px;width:24px;height:24px" viewBox="0 0 24 24"><path fill="#5082b0" d="M7,2V13H10V22L17,10H13L17,2H7Z"/></svg>
<div class="t " style="top:856.25px;font-size:14px;line-height:14px;letter-spacing:-0.1px;left:1078px;">MCP23017 Pin #5</div>
<div class="trk" style="left:1440.50px;top:857.20px"></div>
<div class="thb" style="left:1440.50px;top:854.20px"></div>
<svg class="ic" style="left:1030.00px;top:900.20px;width:24px;height:24px" viewBox="0 0 24 24"><path fill="#5082b0" d="M7,2V13H10V22L17,10H13L17,2H7Z"/></svg>
<div class="t " style="top:904.25px;font-size:14px;line-height:14px;letter-spacing:-0.1px;left:1078px;">MCP23017 Pin #6</div>
<div class="trk" style="left:1440.50px;top:905.20px"></div>
<div class="thb" style="left:1440.50px;top:902.20px"></div>
<svg class="ic" style="left:1030.00px;top:948.20px;width:24px;height:24px" viewBox="0 0 24 24"><path fill="#5082b0" d="M7,2V13H10V22L17,10H13L17,2H7Z"/></svg>
<div class="t " style="top:952.25px;font-size:14px;line-height:14px;letter-spacing:-0.1px;left:1078px;">MCP23017 Pin #7</div>
<div class="trk" style="left:1440.50px;top:953.20px"></div>
<div class="thb" style="left:1440.50px;top:950.20px"></div>
<svg class="ic" style="left:1030.00px;top:996.20px;width:24px;height:24px" viewBox="0 0 24 24"><path fill="#5082b0" d="M7,2V13H10V22L17,10H13L17,2H7Z"/></svg>
<div class="t " style="top:1000.25px;font-size:14px;line-height:14px;letter-spacing:-0.1px;left:1078px;">MCP23017 Pin #8</div>
<div class="trk" style="left:1440.50px;top:1001.20px"></div>
<div class="thb" style="left:1440.50px;top:998.20px"></div>
<svg class="ic" style="left:1030.00px;top:1044.20px;width:24px;height:24px" viewBox="0 0 24 24"><path fill="#5082b0" d="M7,2V13H10V22L17,10H13L17,2H7Z"/></svg>
<div class="t " style="top:1048.25px;font-size:14px;line-height:14px;letter-spacing:-0.1px;left:1078px;">MCP23017 Pin #9</div>
<div class="trk" style="left:1440.50px;top:1049.20px"></div>
<div class="thb" style="left:1440.50px;top:1046.20px"></div>
</body></html>
